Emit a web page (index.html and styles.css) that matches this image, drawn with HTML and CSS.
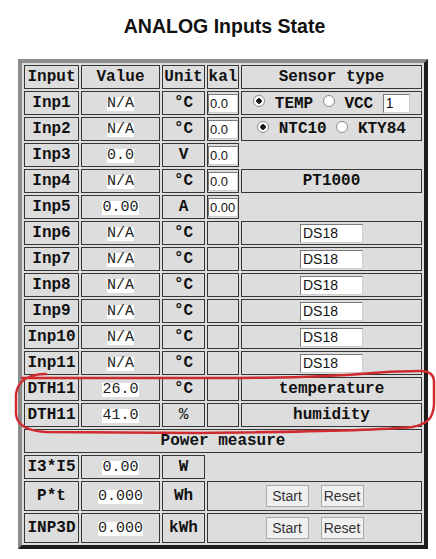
FILE: index.html
```html
<!DOCTYPE html>
<html lang="en">
<head>
  <meta charset="UTF-8">
  <meta name="viewport" content="width=device-width, initial-scale=1.0">
  <title>ANALOG Inputs State</title>
  <link rel="stylesheet" href="styles.css">
</head>
<body>
  <div class="page">
    <h1 class="title">ANALOG Inputs State</h1>

    <table class="inputs">
      <colgroup>
        <col class="c-name">
        <col class="c-val">
        <col class="c-unit">
        <col class="c-kal">
        <col class="c-sensor">
      </colgroup>
      <tr>
        <td>Input</td><td>Value</td><td>Unit</td><td>kal</td><td>Sensor type</td>
      </tr>
      <tr>
        <td>Inp1</td>
        <td><span class="val">N/A</span></td>
        <td>°C</td>
        <td><input class="box kal" value="0.0"></td>
        <td><input type="radio" class="radio" name="t1" checked> TEMP <input type="radio" class="radio" name="t1"> VCC <input class="box vcc" value="1"></td>
      </tr>
      <tr>
        <td>Inp2</td>
        <td><span class="val">N/A</span></td>
        <td>°C</td>
        <td><input class="box kal" value="0.0"></td>
        <td><input type="radio" class="radio" name="t2" checked> NTC10 <input type="radio" class="radio" name="t2"> KTY84</td>
      </tr>
      <tr>
        <td>Inp3</td>
        <td><span class="val">0.0</span></td>
        <td>V</td>
        <td><input class="box kal" value="0.0"></td>
      </tr>
      <tr>
        <td>Inp4</td>
        <td><span class="val">N/A</span></td>
        <td>°C</td>
        <td><input class="box kal" value="0.0"></td>
        <td>PT1000</td>
      </tr>
      <tr>
        <td>Inp5</td>
        <td><span class="val">0.00</span></td>
        <td>A</td>
        <td><input class="box kal" value="0.00"></td>
      </tr>
      <tr>
        <td>Inp6</td><td><span class="val">N/A</span></td><td>°C</td><td></td>
        <td><input class="box ds" value="DS18"></td>
      </tr>
      <tr>
        <td>Inp7</td><td><span class="val">N/A</span></td><td>°C</td><td></td>
        <td><input class="box ds" value="DS18"></td>
      </tr>
      <tr>
        <td>Inp8</td><td><span class="val">N/A</span></td><td>°C</td><td></td>
        <td><input class="box ds" value="DS18"></td>
      </tr>
      <tr>
        <td>Inp9</td><td><span class="val">N/A</span></td><td>°C</td><td></td>
        <td><input class="box ds" value="DS18"></td>
      </tr>
      <tr>
        <td>Inp10</td><td><span class="val">N/A</span></td><td>°C</td><td></td>
        <td><input class="box ds" value="DS18"></td>
      </tr>
      <tr>
        <td>Inp11</td><td><span class="val">N/A</span></td><td>°C</td><td></td>
        <td><input class="box ds" value="DS18"></td>
      </tr>
      <tr>
        <td>DTH11</td><td><span class="val">26.0</span></td><td>°C</td><td></td>
        <td>temperature</td>
      </tr>
      <tr>
        <td>DTH11</td><td><span class="val">41.0</span></td><td class="thin">%</td><td></td>
        <td>humidity</td>
      </tr>
      <tr>
        <td colspan="5">Power measure</td>
      </tr>
      <tr>
        <td>I3*I5</td><td><span class="val">0.00</span></td><td>W</td>
      </tr>
      <tr class="tall">
        <td>P*t</td><td><span class="val">0.000</span></td><td>Wh</td>
        <td colspan="2"><button class="btn">Start</button><button class="btn">Reset</button></td>
      </tr>
      <tr class="tall">
        <td>INP3D</td><td><span class="val">0.000</span></td><td>kWh</td>
        <td colspan="2"><button class="btn">Start</button><button class="btn">Reset</button></td>
      </tr>
    </table>
  </div>

  <!-- hand-drawn marker around the DTH11 rows -->
  <svg class="marker" width="436" height="559" viewBox="0 0 436 559">
    <path d="M46 374 C30 374 18 380 16 394 L16 414 C17 426 28 431 46 432 L200 433 C300 432 380 430 412 427 C428 424 433 418 434 405 L434 382 C434 375 430 371 420 371 C395 371 380 372 360 374 C300 379 200 378 100 378 L22 378"
          fill="none" stroke="#d02a2e" stroke-width="2.5" stroke-linecap="round"/>
  </svg>
</body>
</html>
```

FILE: styles.css
```css
body {
  margin: 0;
  background-color: #fff;
  font-family: "Liberation Sans", Arial, sans-serif;
}

.page {
  width: 410px;
  margin-left: 18px;
  padding-top: 15px;
}

.title {
  margin: 0 0 22px 0;
  padding-left: 3px;
  font-size: 19.5px;
  line-height: 22px;
  font-weight: bold;
  text-align: center;
  color: #111;
}

.inputs {
  width: 410px;
  table-layout: fixed;
  border-collapse: separate;
  border-spacing: 2px;
  border: 4px solid;
  border-color: #8c8c8c #1c1c1c #1c1c1c #8c8c8c;
  background-color: #dddddd;
}

.c-name { width: 55px; }
.c-val { width: 79px; }
.c-unit { width: 43px; }
.c-kal { width: 32px; }

.inputs td {
  height: 22px;
  padding: 0;
  border: 1px solid #363636;
  background-color: #dddddd;
  text-align: center;
  vertical-align: middle;
  font-family: "Liberation Mono", "Courier New", monospace;
  font-weight: bold;
  font-size: 16px;
  color: #111;
  white-space: nowrap;
  overflow: hidden;
}

.inputs tr.tall td {
  height: 28px;
}

.inputs td.thin {
  font-weight: normal;
}

.val {
  display: inline-block;
  line-height: 14px;
  background-color: #fff;
  font-weight: normal;
  font-size: 15px;
  color: #222;
}

.box {
  box-sizing: border-box;
  height: 19px;
  margin: 0;
  padding: 0 2px;
  border: 1px solid;
  border-color: #7a7a7a #cfcfcf #cfcfcf #7a7a7a;
  background-color: #fff;
  font-family: "Liberation Sans", Arial, sans-serif;
  font-size: 14px;
  color: #111;
  vertical-align: middle;
}

.kal {
  width: 30px;
  padding: 0 1px;
  font-size: 13px;
}

.vcc { width: 27px; }
.ds { width: 63px; }

.radio {
  appearance: none;
  -webkit-appearance: none;
  width: 12px;
  height: 12px;
  margin: 0;
  border: 1px solid #8a8a8a;
  border-radius: 50%;
  background-color: #fff;
  vertical-align: middle;
  position: relative;
  top: -2px;
}

.radio:checked {
  background: radial-gradient(circle, #1a1a1a 0, #1a1a1a 2.5px, #fff 3px);
}

.btn {
  box-sizing: border-box;
  width: 43px;
  height: 22px;
  margin: 0 6px;
  padding: 0;
  border: 1px solid #a8a8a8;
  border-radius: 0;
  background-color: #f0f0f0;
  font-family: "Liberation Sans", Arial, sans-serif;
  font-size: 14px;
  color: #333;
  vertical-align: middle;
}

.marker {
  position: absolute;
  top: 0;
  left: 0;
  pointer-events: none;
}
```
